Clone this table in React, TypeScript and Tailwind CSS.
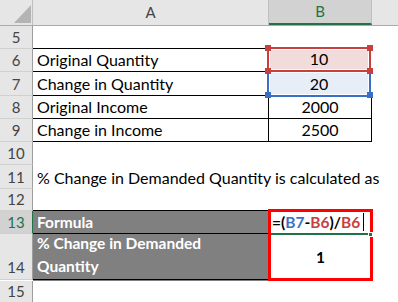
import React from "react";

const font = "font-['Lato','Liberation_Sans',sans-serif]";

function RowHead({ n, h, active, bottom }: { n: number; h: string; active?: boolean; bottom?: boolean }) {
  return (
    <div
      className={`w-[33px] shrink-0 flex justify-center border-b border-r-[1px] border-b-[#d0d0d0] ${h} ${
        bottom ? "items-end pb-[2px]" : "items-end pb-[1px]"
      } ${
        active
          ? "bg-[#d2d2d2] text-[#217346] border-r-2 border-r-[#217346]"
          : "bg-[#e6e6e6] text-[#444] border-r-[#9e9e9e]"
      } text-[15px] leading-[20px]`}
    >
      {n}
    </div>
  );
}

export default function App() {
  return (
    <div className={`w-[398px] h-[302px] overflow-hidden bg-white ${font}`}>
      {/* column headers */}
      <div className="flex h-[26px] border-b border-[#ababab] bg-[#e6e6e6] text-[15px] text-[#444]">
        <div className="w-[33px] shrink-0 border-r border-[#bfbfbf] relative">
          <svg width="33" height="25" className="absolute left-0 top-0">
            <polygon points="31,5 31,23 14,23" fill="#b4b4b4" />
          </svg>
        </div>
        <div className="w-[236px] shrink-0 border-r border-[#bfbfbf] flex items-center justify-center">A</div>
        <div className="w-[103px] shrink-0 bg-[#d2d2d2] border-r border-[#bfbfbf] border-b-2 border-b-[#217346] flex items-center justify-center text-[#217346]">
          B
        </div>
        <div className="flex-1" />
      </div>

      {/* row 5 */}
      <div className="flex">
        <RowHead n={5} h="h-[23px]" />
        <div className="w-[236px] shrink-0 border-b border-black" />
        <div className="w-[103px] shrink-0 border-b border-black" />
      </div>

      {/* row 6 */}
      <div className="flex text-[16px] text-black leading-[20px]">
        <RowHead n={6} h="h-[23px]" />
        <div className="w-[236px] shrink-0 border-b border-black flex items-end pb-[1px] pl-[4px]">Original Quantity</div>
        <div className="w-[104px] shrink-0 -ml-[2px] -mt-[2px] h-[25px] border-2 border-[#c6403e] p-[1px] relative z-10">
          <div className="h-full bg-[#f2dcdb] flex items-end justify-center">10</div>
          <span className="absolute -left-[4px] -top-[4px] w-[6px] h-[6px] bg-[#c6403e]" />
          <span className="absolute -right-[4px] -top-[4px] w-[6px] h-[6px] bg-[#c6403e]" />
          <span className="absolute -left-[4px] -bottom-[4px] w-[6px] h-[6px] bg-[#c6403e] z-20" />
          <span className="absolute -right-[4px] -bottom-[4px] w-[6px] h-[6px] bg-[#c6403e] z-20" />
        </div>
      </div>

      {/* row 7 */}
      <div className="flex text-[16px] text-black leading-[20px]">
        <RowHead n={7} h="h-[24px]" />
        <div className="w-[236px] shrink-0 border-b border-black flex items-end pb-[1px] pl-[4px]">Change in Quantity</div>
        <div className="w-[104px] shrink-0 -ml-[2px] h-[25px] -mb-[1px] border-2 border-t-0 border-[#3a6fc6] p-[1px] relative">
          <div className="h-full bg-[#e8eef8] flex items-end justify-center">20</div>
          <span className="absolute -left-[4px] -bottom-[3px] w-[6px] h-[6px] bg-[#3a6fc6]" />
          <span className="absolute -right-[4px] -bottom-[3px] w-[6px] h-[6px] bg-[#3a6fc6]" />
        </div>
      </div>

      {/* row 8 */}
      <div className="flex text-[16px] text-black leading-[20px]">
        <RowHead n={8} h="h-[23px]" />
        <div className="w-[236px] shrink-0 border-b border-black flex items-end pb-[1px] pl-[4px]">Original Income</div>
        <div className="w-[104px] shrink-0 -ml-[1px] border-x border-b border-black flex items-end justify-center pb-[1px]">2000</div>
      </div>

      {/* row 9 */}
      <div className="flex text-[16px] text-black leading-[20px]">
        <RowHead n={9} h="h-[23px]" />
        <div className="w-[236px] shrink-0 border-b border-black flex items-end pb-[1px] pl-[4px]">Change in Income</div>
        <div className="w-[104px] shrink-0 -ml-[1px] border-x border-b border-black flex items-end justify-center pb-[1px]">2500</div>
      </div>

      {/* row 10 */}
      <div className="flex">
        <RowHead n={10} h="h-[23px]" />
      </div>

      {/* row 11 */}
      <div className="flex text-[16px] text-black leading-[20px]">
        <RowHead n={11} h="h-[24px]" />
        <div className="flex items-end pb-[1px] pl-[4px] whitespace-nowrap">% Change in Demanded Quantity is calculated as</div>
      </div>

      {/* row 12 */}
      <div className="flex">
        <RowHead n={12} h="h-[22px]" />
        <div className="w-[236px] shrink-0 border-b border-black" />
      </div>

      {/* rows 13-14 */}
      <div className="flex text-[15.5px] leading-[20px]">
        <div className="flex flex-col">
          <RowHead n={13} h="h-[23px]" active />
          <RowHead n={14} h="h-[46px]" bottom />
        </div>
        <div className="w-[236px] shrink-0 flex flex-col bg-[#808080] text-white font-bold">
          <div className="h-[23px] border-b border-black flex items-end pb-[1px] pl-[4px]">Formula</div>
          <div className="h-[46px] border-b border-black flex flex-col justify-end pb-[1px] pl-[4px] leading-[23px] whitespace-nowrap">
            <span>% Change in Demanded</span>
            <span>Quantity</span>
          </div>
        </div>
        <div className="w-[105px] shrink-0 -ml-[1px] -mt-[2px] h-[72px] border-[3px] border-[#ff0000] flex flex-col relative font-bold">
          <div className="h-[23px] border-b-2 border-[#217346] flex items-end pb-[1px] pl-[1px] text-black">
            <span>=(</span>
            <span className="text-[#3f6fc4]">B7</span>
            <span>-</span>
            <span className="text-[#c6403e]">B6</span>
            <span>)/</span>
            <span className="text-[#c6403e]">B6</span>
            <span className="w-[1px] h-[18px] bg-black ml-[3px] mb-[1px]" />
          </div>
          <div className="flex-1 flex items-center justify-center text-black">1</div>
          <span className="absolute right-[-3px] top-[20px] w-[5px] h-[5px] bg-[#217346] border border-white" />
        </div>
      </div>

      {/* row 15 */}
      <div className="flex">
        <RowHead n={15} h="h-[22px]" />
      </div>
    </div>
  );
}
